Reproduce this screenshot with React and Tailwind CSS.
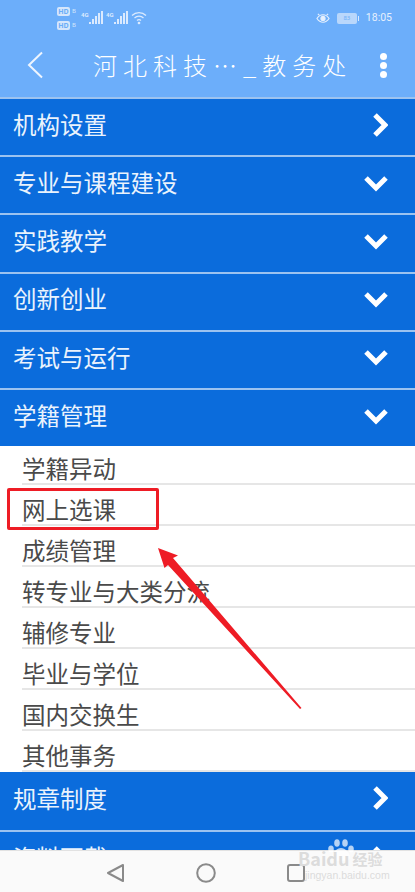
const CJK = "font-['Noto_Sans_CJK_SC',sans-serif]";

const topItems = [
  { label: '机构设置', open: false },
  { label: '专业与课程建设', open: true },
  { label: '实践教学', open: true },
  { label: '创新创业', open: true },
  { label: '考试与运行', open: true },
  { label: '学籍管理', open: true },
];

const subItems = ['学籍异动', '网上选课', '成绩管理', '转专业与大类分流', '辅修专业', '毕业与学位', '国内交换生', '其他事务'];

const Signal = () => (
  <svg width="24" height="16" viewBox="0 0 24 16" fill="#dbeafe">
    <text x="0" y="7" fontSize="6" fontFamily="Roboto" fontWeight="700">4G</text>
    <rect x="8" y="12" width="2" height="2" />
    <rect x="11" y="9" width="2" height="5" />
    <rect x="14" y="6" width="2" height="8" />
    <rect x="17" y="3" width="2" height="11" />
    <rect x="20" y="1" width="2" height="13" />
  </svg>
);

const HdBadge = () => (
  <div className="flex items-center gap-[2px]">
    <span className="flex h-[9px] w-[13px] items-center justify-center rounded-[2px] bg-[#d5e6fb] text-[7px] font-bold leading-none text-[#6aaef8]">HD</span>
    <span className="text-[6px] leading-none text-[#d5e6fb]">B</span>
  </div>
);

const StatusBar = () => (
  <div className="flex h-[36px] items-center justify-between pl-[57px] pr-[23px]">
    <div className="flex items-center gap-[1px]">
      <div className="mr-[4px] flex flex-col gap-[5px]">
        <HdBadge />
        <HdBadge />
      </div>
      <Signal />
      <Signal />
      <svg width="16" height="14" viewBox="0 0 16 14" fill="none" stroke="#dbeafe" strokeWidth="1.3">
        <path d="M1 4.5a10 10 0 0 1 14 0" />
        <path d="M3.5 7a6.5 6.5 0 0 1 9 0" />
        <path d="M6 9.5a3 3 0 0 1 4 0" />
        <circle cx="8" cy="12" r="0.7" fill="#dbeafe" />
      </svg>
    </div>
    <div className="flex items-center gap-[7px]">
      <svg width="14" height="12" viewBox="0 0 15 12" fill="none" stroke="#e6f0fd" strokeWidth="1.2">
        <path d="M1 6.5C3 3.5 5 2.500 7.500 2.500s4.500 1 6.500 4c-2 3-4 4-6.500 4S3 9.500 1 6.500Z" />
        <circle cx="7.500" cy="6.500" r="2.200" fill="#e6f0fd" />
        <path d="M2 1.500 3.500 3M13 1.500 11.500 3" />
      </svg>
      <div className="flex items-center gap-[1px]">
        <div className="flex h-[11px] w-[20px] items-center justify-center rounded-[2px] bg-[#b9d7fb] text-[6px] leading-none text-[#6aaef8]">83</div>
        <div className="h-[5px] w-[1px] bg-[#dbeafe]" />
      </div>
      <span className="font-['Roboto',sans-serif] text-[10.5px] leading-none text-[#e6f0fd]">18:05</span>
    </div>
  </div>
);

const Header = () => (
  <div className="h-[97px] bg-[#6caefa]">
    <StatusBar />
    <div className="flex h-[58px] items-center justify-between pl-[27px] pr-[28px] text-white">
      <svg width="16" height="28" viewBox="0 0 16 28" fill="none" stroke="#eef5fe" strokeWidth="2">
        <path d="M15 1.500 2 14l13 12.500" />
      </svg>
      <div className={`${CJK} ml-[50px] flex-1 text-[24px] font-light leading-none tracking-[6px]`}>
        河北科技…_教务处
      </div>
      <div className="flex flex-col gap-[2px]">
        <span className="h-[7px] w-[7px] rounded-full bg-white" />
        <span className="h-[7px] w-[7px] rounded-full bg-white" />
        <span className="h-[7px] w-[7px] rounded-full bg-white" />
      </div>
    </div>
  </div>
);

const RightChevron = () => (
  <svg width="16" height="24" viewBox="0 0 16 24" fill="none" stroke="#ffffff" strokeWidth="5">
    <path d="M3 2l10 10L3 22" />
  </svg>
);

const DownChevron = () => (
  <svg className="mt-[1px]" width="24" height="17" viewBox="0 0 24 17" fill="none" stroke="#ffffff" strokeWidth="5">
    <path d="M2 3l10 10L22 3" />
  </svg>
);

const Row = ({ label, open, noBorder }) => (
  <div className={`flex items-center justify-between bg-[#0b6cdc] pb-[5px] pl-[13px] pr-[27px] ${noBorder ? 'h-[58px]' : 'h-[58.2px] border-t-2 border-[#9cc3f0]'}`}>
    <span className={`${CJK} text-[23.5px] leading-none text-[#eaf3fd]`}>{label}</span>
    {open ? <DownChevron /> : <RightChevron />}
  </div>
);

const SubItem = ({ label }) => (
  <div className="ml-[22px] flex h-[41px] items-end border-b-2 border-[#e6e6e6] pb-[2px] first:h-[38.8px]">
    <span className={`${CJK} text-[23.5px] leading-none text-[#4a4a4a]`}>{label}</span>
  </div>
);

const NavBar = () => (
  <div className="flex h-[42px] items-center gap-[71px] border-t border-[#e2e2e2] bg-[#fafafa] pl-[106px] pt-[3px]">
    <svg width="19" height="20" viewBox="0 0 19 20" fill="none" stroke="#8a8a8a" strokeWidth="2" strokeLinejoin="round">
      <path d="M17 2 2 10l15 8Z" />
    </svg>
    <svg width="20" height="20" viewBox="0 0 20 20" fill="none" stroke="#8a8a8a" strokeWidth="2">
      <circle cx="10" cy="10" r="8.800" />
    </svg>
    <svg width="18" height="18" viewBox="0 0 18 18" fill="none" stroke="#8a8a8a" strokeWidth="2">
      <rect x="1" y="1" width="16" height="16" rx="2" />
    </svg>
  </div>
);

export default function App() {
  return (
    <div className="relative flex h-[892px] w-[415px] flex-col overflow-hidden bg-white">
      <Header />
      <div className="flex-1 overflow-hidden">
        {topItems.map((item) => (
          <Row key={item.label} label={item.label} open={item.open} />
        ))}
        <div className="bg-white">
          {subItems.map((label) => (
            <SubItem key={label} label={label} />
          ))}
        </div>
        <Row label="规章制度" open={false} noBorder />
        <Row label="资料下载" open={false} />
      </div>
      <NavBar />

      {/* red annotation box */}
      <div className="absolute left-[7px] top-[488px] h-[42px] w-[152px] rounded-[2px] border-[3px] border-[#ee1c25]" />

      {/* red annotation arrow */}
      <svg className="absolute left-[150px] top-[540px]" width="160" height="175" viewBox="0 0 160 175">
        <path d="M8 8 L28 15.500 L23 18 L151.500 168 L150 169 L18 25 L14.500 28 Z" fill="#ee1c25" />
      </svg>

      {/* watermark */}
      <div className="absolute left-[298px] top-[838px] h-[44px] w-[112px]">
        <svg className="absolute left-[28px] top-0" width="30" height="24" viewBox="0 0 30 24" fill="#ffffff" fillOpacity="0.7">
          <ellipse cx="5" cy="11" rx="2.800" ry="3.600" />
          <ellipse cx="11" cy="5" rx="2.800" ry="3.800" />
          <ellipse cx="19" cy="5" rx="2.800" ry="3.800" />
          <ellipse cx="25" cy="11" rx="2.800" ry="3.600" />
          <path d="M15 10c-4 0-9 5-9 9 0 3 4 4 9 4s9-1 9-4c0-4-5-9-9-9Z" />
        </svg>
        <div className={`${CJK} absolute left-0 top-[11px] flex items-center whitespace-nowrap text-[18px] font-bold leading-none text-[#dcdcdc]`}>
          <span>Baidu</span>
          <span className="ml-[3px] text-[15px]">经验</span>
        </div>
        <div className="absolute left-[7px] top-[32px] whitespace-nowrap font-['Liberation_Sans',sans-serif] text-[10.5px] leading-none text-[#dcdcdc]">
          jingyan.baidu.com
        </div>
      </div>
    </div>
  );
}
